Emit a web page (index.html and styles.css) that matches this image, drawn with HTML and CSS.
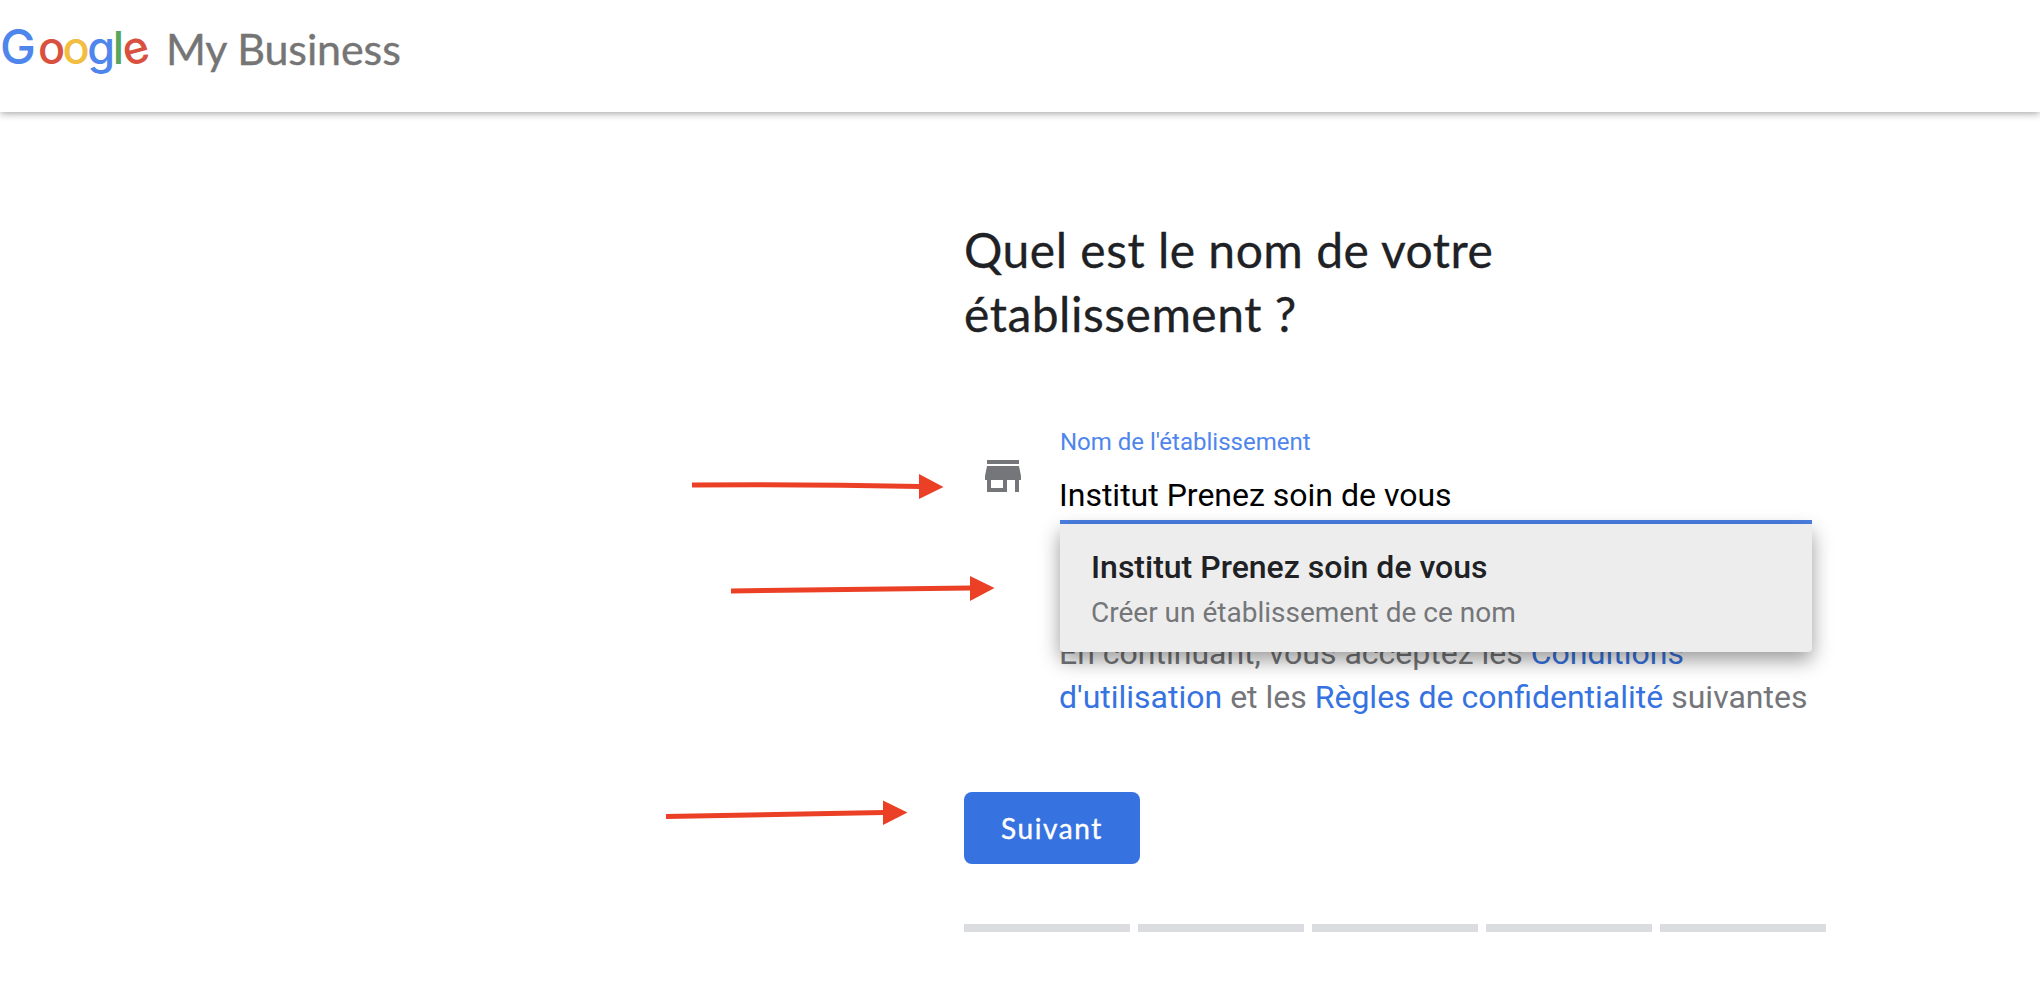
FILE: index.html
```html
<!DOCTYPE html>
<html lang="fr">
<head>
<meta charset="UTF-8">
<meta name="viewport" content="width=device-width, initial-scale=1.0">
<title>Google My Business</title>
<link rel="stylesheet" href="styles.css">
</head>
<body>

<header class="header">
<div class="logo"><span class="blue cap">G</span><span class="red">o</span><span class="yellow">o</span><span class="blue">g</span><span class="green">l</span><span class="red tilt">e</span></div>
<div class="product">My Business</div>
</header>

<main class="content">

<h1>Quel est le nom de votre<br>établissement ?</h1>

<div class="row">
<svg class="store" viewBox="0 0 24 24"><path d="M20 4H4v2h16V4zm1 10v-2l-1-5H4l-1 5v2h1v6h10v-6h4v6h2v-6h1zm-9 4H6v-4h6v4z"/></svg>

<div class="field">
<label class="label" for="name">Nom de l'établissement</label>
<input class="input" id="name" type="text" value="Institut Prenez soin de vous" spellcheck="false" autocomplete="off">

<div class="menu">
<div class="menu-title">Institut Prenez soin de vous</div>
<div class="menu-sub">Créer un établissement de ce nom</div>
</div>

<p class="terms">En continuant, vous acceptez les <a>Conditions<br>d'utilisation</a> et les <a>Règles de confidentialité</a> suivantes</p>
</div>
</div>

<button class="next">Suivant</button>

<div class="steps">
<span></span><span></span><span></span><span></span><span></span>
</div>

</main>

<!-- red arrows -->
<svg class="arrows" viewBox="0 0 2040 996">
<path class="line" d="M692 485Q806 484 920 486.5"/>
<path d="M919 474L943.5 487L919 499z"/>
<path class="line" d="M731 591L971 588"/>
<path d="M970 576L994.5 588L970 601z"/>
<path class="line" d="M666 816.5L884 812.5"/>
<path d="M883 800.5L907.5 812.5L883 825z"/>
</svg>

</body>
</html>
```
FILE: styles.css
```css
*{
    box-sizing:border-box;
}

body{
    margin:0;
    height:996px;
    overflow:hidden;
    background:white;
    font-family:Roboto,sans-serif;
    color:#202124;
}

.header{
    display:flex;
    height:112px;
    box-shadow:0 1px 8px rgba(0,0,0,0.4);
}

.logo{
    width:166px;
    font-family:Inter,sans-serif;
    font-size:45px;
    font-weight:500;
    line-height:94px;
    letter-spacing:-2.5px;
    white-space:nowrap;
}

.cap{
    font-size:48px;
    letter-spacing:2px;
}

.tilt{
    display:inline-block;
    transform:rotate(-15deg);
}

.blue{
    color:#4f86ec;
}

.red{
    color:#d85140;
}

.yellow{
    color:#f2be42;
}

.green{
    color:#58a55c;
}

.product{
    font-family:Lato,sans-serif;
    font-size:43px;
    line-height:97px;
    letter-spacing:-0.1px;
    color:#757575;
    -webkit-text-stroke:0.4px #757575;
    white-space:nowrap;
}

.content{
    width:862px;
    margin-left:964px;
    padding-top:106px;
}

h1{
    margin:0;
    font-family:Lato,sans-serif;
    font-size:48px;
    font-weight:400;
    line-height:64px;
    letter-spacing:0.5px;
    -webkit-text-stroke:0.3px #202124;
}

.row{
    display:flex;
    margin-top:80px;
    padding-left:15px;
}

.store{
    width:48px;
    height:48px;
    margin:26px 33px 0 0;
    fill:#747679;
}

.field{
    position:relative;
    width:752px;
}

.label{
    display:block;
    font-size:24px;
    line-height:32px;
    color:#4f86ec;
}

.input{
    display:block;
    width:100%;
    height:66px;
    padding:17px 0 5px;
    border:0;
    border-bottom:4px solid #4b80e3;
    outline:0;
    background:none;
    font-family:inherit;
    font-size:32px;
    line-height:40px;
    color:black;
    text-indent:-1px;
}

.menu{
    position:absolute;
    top:98px;
    left:0;
    width:752px;
    height:128px;
    padding:23px 31px;
    background:#ededed;
    border-radius:0 0 4px 4px;
    box-shadow:0 8px 20px rgba(0,0,0,0.4);
    line-height:40px;
}

.menu-title{
    font-size:32px;
    font-weight:500;
}

.menu-sub{
    margin-top:6px;
    font-size:28px;
    color:#747679;
}

.terms{
    margin:107px 0 0 -1px;
    font-size:32px;
    line-height:44px;
    color:#747679;
    white-space:nowrap;
}

.terms a{
    color:#3673e0;
}

.next{
    display:block;
    width:176px;
    height:72px;
    margin-top:73px;
    padding:0;
    border:0;
    border-radius:8px;
    background:#3673e0;
    color:white;
    font-family:Lato,sans-serif;
    font-size:28px;
    letter-spacing:1.6px;
    -webkit-text-stroke:0.4px white;
}

.steps{
    display:flex;
    gap:8px;
    margin-top:60px;
}

.steps span{
    flex:1;
    height:8px;
    background:#dadce0;
}

.arrows{
    position:absolute;
    top:0;
    left:0;
    width:2040px;
    height:996px;
    fill:#eb4026;
    pointer-events:none;
}

.line{
    fill:none;
    stroke:#eb4026;
    stroke-width:5;
}
```
